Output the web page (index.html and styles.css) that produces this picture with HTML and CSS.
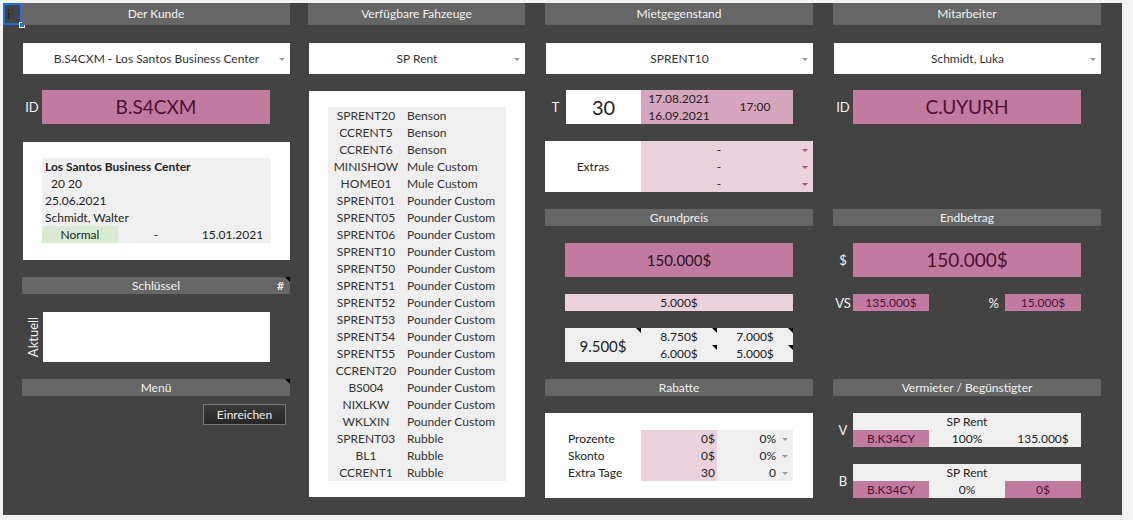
FILE: index.html
```html
<!DOCTYPE html>
<html lang="de">
<head>
  <meta charset="UTF-8" />
  <title>Mietvertrag</title>
  <link rel="stylesheet" href="styles.css">
</head>
<body>
  <div class="sheet">
    <div class="sel-cell">i<span class="sel-handle"></span></div>

    <!-- Der Kunde -->
    <section class="col">
      <div class="hdr hdr-top">Der Kunde</div>
      <div class="dropdown">B.S4CXM - Los Santos Business Center</div>
      <div class="pair">
        <span class="lbl">ID</span>
        <div class="big pink">B.S4CXM</div>
      </div>
      <div class="card">
        <div class="card-inner">
          <div class="line bold">Los Santos Business Center</div>
          <div class="line indent">20 20</div>
          <div class="line">25.06.2021</div>
          <div class="line">Schmidt, Walter</div>
          <div class="tri-row">
            <span class="green">Normal</span>
            <span>-</span>
            <span>15.01.2021</span>
          </div>
        </div>
      </div>
      <div class="hdr has-note">Schlüssel<span class="hash">#</span></div>
      <div class="key-row">
        <span class="vlbl">Aktuell</span>
        <div class="key-box"></div>
      </div>
      <div class="hdr has-note">Menü</div>
      <button class="submit">Einreichen</button>
    </section>

    <!-- Fahrzeuge -->
    <section class="col col-cars">
      <div class="hdr hdr-top">Verfügbare Fahzeuge</div>
      <div class="dropdown">SP Rent</div>
      <div class="panel cars-panel">
        <div class="car-list">
          <span>SPRENT20</span><span>Benson</span>
          <span>CCRENT5</span><span>Benson</span>
          <span>CCRENT6</span><span>Benson</span>
          <span>MINISHOW</span><span>Mule Custom</span>
          <span>HOME01</span><span>Mule Custom</span>
          <span>SPRENT01</span><span>Pounder Custom</span>
          <span>SPRENT05</span><span>Pounder Custom</span>
          <span>SPRENT06</span><span>Pounder Custom</span>
          <span>SPRENT10</span><span>Pounder Custom</span>
          <span>SPRENT50</span><span>Pounder Custom</span>
          <span>SPRENT51</span><span>Pounder Custom</span>
          <span>SPRENT52</span><span>Pounder Custom</span>
          <span>SPRENT53</span><span>Pounder Custom</span>
          <span>SPRENT54</span><span>Pounder Custom</span>
          <span>SPRENT55</span><span>Pounder Custom</span>
          <span>CCRENT20</span><span>Pounder Custom</span>
          <span>BS004</span><span>Pounder Custom</span>
          <span>NIXLKW</span><span>Pounder Custom</span>
          <span>WKLXIN</span><span>Pounder Custom</span>
          <span>SPRENT03</span><span>Rubble</span>
          <span>BL1</span><span>Rubble</span>
          <span>CCRENT1</span><span>Rubble</span>
        </div>
      </div>
    </section>

    <!-- Mietgegenstand -->
    <section class="col col-gap">
      <div class="hdr hdr-top">Mietgegenstand</div>
      <div class="dropdown">SPRENT10</div>
      <div class="pair">
        <span class="lbl lbl-t">T</span>
        <div class="days">30</div>
        <div class="dates">
          <div class="date-col"><span>17.08.2021</span><span>16.09.2021</span></div>
          <div class="time">17:00</div>
        </div>
      </div>
      <div class="extras">
        <div class="extras-lbl">Extras</div>
        <div class="extras-list">
          <span class="pick">-</span>
          <span class="pick">-</span>
          <span class="pick">-</span>
        </div>
      </div>
      <div class="hdr hdr-gap">Grundpreis</div>
      <div class="big pink price mid">150.000$</div>
      <div class="thin light">5.000$</div>
      <div class="tiers">
        <div class="tier-main note">9.500$</div>
        <div class="note">8.750$</div>
        <div class="note">7.000$</div>
        <div class="note">6.000$</div>
        <div class="note">5.000$</div>
      </div>
      <div class="hdr hdr-gap">Rabatte</div>
      <div class="panel discount">
        <div class="disc-grid">
          <span class="disc-lbl">Prozente</span><span class="disc-val">0$</span><span class="disc-pick">0%</span>
          <span class="disc-lbl">Skonto</span><span class="disc-val">0$</span><span class="disc-pick">0%</span>
          <span class="disc-lbl">Extra Tage</span><span class="disc-val">30</span><span class="disc-pick">0</span>
        </div>
      </div>
    </section>

    <!-- Mitarbeiter -->
    <section class="col col-gap">
      <div class="hdr hdr-top">Mitarbeiter</div>
      <div class="dropdown">Schmidt, Luka</div>
      <div class="pair">
        <span class="lbl">ID</span>
        <div class="big pink">C.UYURH</div>
      </div>
      <div class="hdr end-hdr">Endbetrag</div>
      <div class="pair pair-gap">
        <span class="lbl">$</span>
        <div class="big pink">150.000$</div>
      </div>
      <div class="split">
        <span class="lbl">VS</span>
        <div class="cell pink">135.000$</div>
        <span class="pct">%</span>
        <div class="cell pink">15.000$</div>
      </div>
      <div class="hdr party-hdr">Vermieter / Begünstigter</div>
      <div class="pair pair-gap">
        <span class="lbl">V</span>
        <div class="party">
          <div class="party-name">SP Rent</div>
          <span class="pink">B.K34CY</span><span>100%</span><span>135.000$</span>
        </div>
      </div>
      <div class="pair pair-gap">
        <span class="lbl">B</span>
        <div class="party">
          <div class="party-name">SP Rent</div>
          <span class="pink">B.K34CY</span><span>0%</span><span class="pink">0$</span>
        </div>
      </div>
    </section>
  </div>
</body>
</html>
```

FILE: styles.css
```css
* {
  box-sizing: border-box;
}

body {
  margin: 0;
  background: #f3f3f3;
  font-family: Lato, "Liberation Sans", sans-serif;
  font-size: 12px;
  color: #222;
}

.sheet {
  position: relative;
  display: flex;
  margin: 3px 0 0 3px;
  width: 1119px;
  height: 512px;
  padding-left: 19px;
  background: #434343;
}

/* selected cell in the corner */
.sel-cell {
  position: absolute;
  left: 0;
  top: 0;
  width: 19px;
  height: 22px;
  border: 2px solid #1a73e8;
  padding-left: 2px;
  line-height: 18px;
  color: #222;
  font-size: 13px;
}

.sel-handle {
  position: absolute;
  right: -5px;
  bottom: -5px;
  width: 6px;
  height: 6px;
  background: #1a73e8;
  border: 1px solid #fff;
}

.col {
  display: flex;
  flex-direction: column;
  width: 268px;
}

.col-cars {
  width: 217px;
  margin-left: 18px;
}

.col-gap {
  margin-left: 20px;
}

.hdr {
  position: relative;
  height: 17px;
  line-height: 17px;
  background: #666;
  color: #f3f3f3;
  text-align: center;
  flex-shrink: 0;
}

.hdr-top {
  height: 22px;
  line-height: 22px;
}

.hdr-gap {
  margin-top: 17px;
}

.has-note::after,
.note::after {
  content: "";
  position: absolute;
  top: 0;
  right: 0;
  border-top: 5px solid #000;
  border-left: 5px solid transparent;
}

.hash {
  position: absolute;
  right: 6px;
  top: 0;
  font-weight: bold;
}

.dropdown {
  position: relative;
  margin: 18px 0 0 1px;
  height: 31px;
  line-height: 31px;
  background: #fff;
  text-align: center;
  color: #333;
}

.dropdown::after,
.pick::after,
.disc-pick::after {
  content: "";
  position: absolute;
  right: 5px;
  top: 50%;
  margin-top: -1px;
  border-top: 3px solid #999;
  border-left: 3px solid transparent;
  border-right: 3px solid transparent;
}

.pair {
  display: flex;
  align-items: center;
  margin-top: 16px;
  height: 34px;
}

.pair-gap {
  margin-top: 17px;
}

.lbl {
  width: 20px;
  text-align: center;
  color: #f3f3f3;
  font-size: 13px;
}

.lbl-t {
  width: 21px;
}

.pink {
  background: #c27ba0;
  color: #4c1130;
}

.light {
  background: #ead1dc;
}

.big {
  width: 228px;
  height: 34px;
  line-height: 34px;
  text-align: center;
  font-size: 19px;
}

/* customer card */
.card {
  margin: 18px 0 0 1px;
  height: 118px;
  padding: 16px 19px 0;
  background: #fff;
}

.card-inner {
  background: #efefef;
}

.line {
  height: 17px;
  line-height: 17px;
  padding-left: 3px;
}

.bold {
  font-weight: bold;
}

.indent {
  padding-left: 9px;
}

.tri-row {
  display: grid;
  grid-template-columns: 76px 76px 77px;
  height: 17px;
  line-height: 17px;
  text-align: center;
}

.green {
  background: #d9ead3;
}

.has-note {
  margin-top: 17px;
}

.key-row {
  display: flex;
  align-items: center;
  margin-top: 18px;
  height: 50px;
}

.vlbl {
  width: 21px;
  transform: rotate(-90deg);
  color: #f3f3f3;
  font-size: 13px;
  white-space: nowrap;
  display: flex;
  justify-content: center;
}

.key-box {
  width: 227px;
  height: 50px;
  background: #fff;
}

.submit {
  align-self: flex-end;
  margin: 8px 4px 0 0;
  width: 83px;
  height: 21px;
  padding: 0;
  border: 1px solid #777;
  background: linear-gradient(#3a3a3a, #262626);
  color: #eee;
  font-family: inherit;
  font-size: 12px;
}

/* vehicles */
.panel {
  margin: 17px 0 0 1px;
  background: #fff;
}

.cars-panel {
  height: 406px;
  padding: 16px 19px 0;
}

.car-list {
  display: grid;
  grid-template-columns: 76px 1fr;
  grid-auto-rows: 17px;
  line-height: 17px;
  background: #efefef;
  color: #333;
}

.car-list span:nth-child(odd) {
  text-align: center;
}

.car-list span:nth-child(even) {
  padding-left: 3px;
}

/* rental item */
.days {
  width: 75px;
  height: 34px;
  line-height: 34px;
  background: #fff;
  text-align: center;
  font-size: 20px;
}

.dates {
  display: grid;
  grid-template-columns: 76px 76px;
  height: 34px;
  background: #d5a6bd;
}

.date-col {
  display: flex;
  flex-direction: column;
  align-items: center;
  line-height: 17px;
}

.time {
  line-height: 34px;
  text-align: center;
}

.extras {
  display: flex;
  margin-top: 17px;
  height: 51px;
}

.extras-lbl {
  width: 96px;
  line-height: 51px;
  background: #fff;
  text-align: center;
}

.extras-list {
  display: flex;
  flex-direction: column;
  flex: 1;
  background: #ead1dc;
}

.pick {
  position: relative;
  height: 17px;
  line-height: 17px;
  padding-right: 16px;
  text-align: center;
}

.pick::after {
  border-top-color: #a64d79;
}

.price {
  margin: 17px 0 0 20px;
}

.mid {
  font-size: 15px;
  color: #2b1320;
}

.thin {
  margin: 17px 0 0 20px;
  width: 228px;
  height: 17px;
  line-height: 17px;
  text-align: center;
}

.tiers {
  display: grid;
  grid-template-columns: 76px 76px 76px;
  grid-auto-rows: 17px;
  margin: 17px 0 0 20px;
  width: 228px;
  line-height: 17px;
  background: #efefef;
  text-align: center;
}

.tiers div {
  position: relative;
}

.tier-main {
  grid-row: span 2;
  line-height: 36px;
  font-size: 15px;
}

.discount {
  margin-left: 0;
  height: 85px;
  padding: 17px 0 0 20px;
}

.disc-grid {
  display: grid;
  grid-template-columns: 76px 76px 76px;
  grid-auto-rows: 17px;
  line-height: 17px;
}

.disc-lbl {
  padding-left: 3px;
}

.disc-val {
  background: #ead1dc;
  text-align: right;
  padding-right: 2px;
}

.disc-pick {
  position: relative;
  background: #efefef;
  text-align: right;
  padding-right: 17px;
}

/* staff */
.end-hdr {
  margin-top: 85px;
}

.split {
  display: flex;
  align-items: center;
  margin-top: 17px;
  height: 17px;
}

.cell {
  width: 76px;
  height: 17px;
  line-height: 17px;
  text-align: center;
}

.pct {
  width: 76px;
  padding-right: 6px;
  text-align: right;
  color: #f3f3f3;
  font-size: 13px;
}

.party-hdr {
  margin-top: 68px;
}

.party {
  display: grid;
  grid-template-columns: 76px 76px 76px;
  grid-auto-rows: 17px;
  width: 228px;
  line-height: 17px;
  background: #efefef;
  text-align: center;
}

.party-name {
  grid-column: span 3;
}
```
